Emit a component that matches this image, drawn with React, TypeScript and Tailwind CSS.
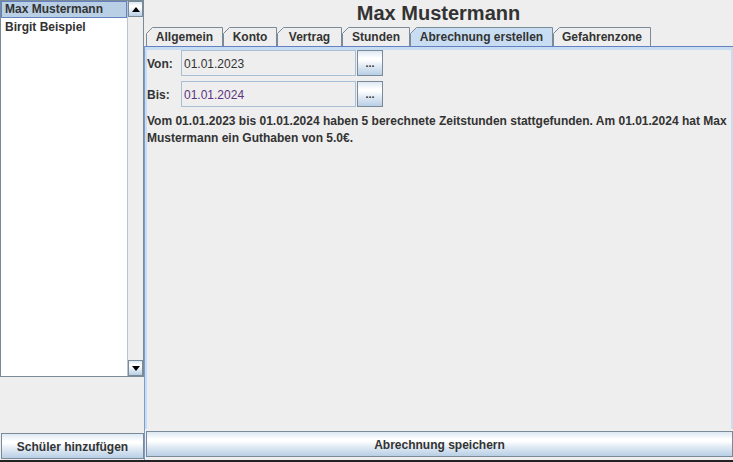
import React from "react";

const btnGrad =
  "bg-[linear-gradient(to_bottom,#dde8f3_0%,#ffffff_30%,#ffffff_38%,#dde8f3_65%,#b8cfe5_100%)]";

function Tab({ label, w, selected }: { label: string; w: number; selected?: boolean }) {
  return (
    <div className="relative h-[19px] shrink-0" style={{ width: w }}>
      <svg className="absolute inset-0" width={w} height={19}>
        <path
          d={`M0.5,19 L0.5,6.5 L6.5,0.5 L${w - 0.5},0.5 L${w - 0.5},19`}
          fill={selected ? "#c8ddf2" : "#eeeeee"}
          stroke="#7a8a99"
          strokeWidth={1}
        />
      </svg>
      <div className="relative text-center pt-[1px] leading-[19px] text-[12px] font-bold text-[#333333]">{label}</div>
    </div>
  );
}

function Arrow({ up }: { up?: boolean }) {
  return (
    <div className={`h-[16px] border border-[#7a8a99] ${btnGrad} flex items-center justify-center`}>
      <svg width="8" height="5">
        <path d={up ? "M0,5 L8,5 L4,0 Z" : "M0,0 L8,0 L4,5 Z"} fill="#000" />
      </svg>
    </div>
  );
}

function DateRow({ label, value, color }: { label: string; value: string; color: string }) {
  return (
    <div className="flex items-center h-[26px]">
      <div className="w-[34px] pt-[1px] text-[12px] font-bold text-[#333333]">{label}</div>
      <div className="w-[175px] h-[26px] border border-[#a8bfd6] bg-[#eeeeee] flex items-center pl-[2px] pt-[1px] text-[12px]" style={{ color }}>
        {value}
      </div>
      <div className={`ml-[1px] w-[26px] h-[26px] border border-[#7a8a99] ${btnGrad} flex items-center justify-center text-[11px] font-bold text-[#333333] leading-none pt-[1px]`}>
        ...
      </div>
    </div>
  );
}

export default function App() {
  return (
    <div className="w-[733px] h-[462px] bg-[#eeeeee] flex flex-col overflow-hidden font-['Liberation_Sans',Arial,sans-serif]">
      <div className="flex h-[460px]">
        {/* left: student list */}
        <div className="w-[144px] flex flex-col">
          <div className="h-[377px] flex border border-[#7a8a99] bg-white">
            <div className="flex-1 flex flex-col">
              <div className="h-[17px] bg-[#b8cfe5] border border-[#6382bf] pl-[3px] leading-[15px] text-[12px] font-bold text-[#333333]">
                Max Mustermann
              </div>
              <div className="h-[17px] pl-[4px] pt-[1px] leading-[17px] text-[12px] font-bold text-[#333333]">Birgit Beispiel</div>
            </div>
            <div className="w-[16px] flex flex-col bg-[#eeeeee] border-l border-[#b8c4d0]">
              <Arrow up />
              <div className="flex-1" />
              <Arrow />
            </div>
          </div>
          <div className="flex-1" />
          <div className={`h-[26px] mb-[1px] ml-[1px] border border-[#7a8a99] ${btnGrad} flex items-center justify-center pt-[1px] text-[12px] font-bold text-[#333333]`}>
            Schüler hinzufügen
          </div>
        </div>

        {/* right: details */}
        <div className="flex-1 flex flex-col">
          <div className="h-[27px] text-center text-[20px] leading-[27px] font-bold text-[#333333]">Max Mustermann</div>
          <div className="h-[19px] flex pl-[2px]">
            <Tab label="Allgemein" w={77} />
            <Tab label="Konto" w={54} />
            <Tab label="Vertrag" w={65} />
            <Tab label="Stunden" w={68} />
            <Tab label="Abrechnung erstellen" w={143} selected />
            <Tab label="Gefahrenzone" w={98} />
          </div>
          <div className="flex-1 flex flex-col border-l border-[#7a9bd0]">
            <div className="flex-1 flex flex-col border-t border-[#6382bf]">
              <div className="flex-1 flex flex-col border-t-[3px] border-r-2 border-l-2 border-[#c8ddf2]">
                <div className="flex flex-col gap-[5px]">
                  <DateRow label="Von:" value="01.01.2023" color="#333333" />
                  <DateRow label="Bis:" value="01.01.2024" color="#5c3380" />
                </div>
                <p className="mt-[6px] text-[12px] leading-[17px] font-bold text-[#333333]">
                  Vom 01.01.2023 bis 01.01.2024 haben 5 berechnete Zeitstunden stattgefunden. Am 01.01.2024 hat Max
                  <br />
                  Mustermann ein Guthaben von 5.0€.
                </p>
              </div>
            </div>
            <div className={`mt-[2px] mb-[3px] ml-[1px] h-[26px] border border-[#7a8a99] ${btnGrad} flex items-center justify-center pt-[1px] text-[12px] font-bold text-[#333333]`}>
              Abrechnung speichern
            </div>
          </div>
        </div>
      </div>
      <div className="h-[2px] bg-[#222222]" />
    </div>
  );
}
